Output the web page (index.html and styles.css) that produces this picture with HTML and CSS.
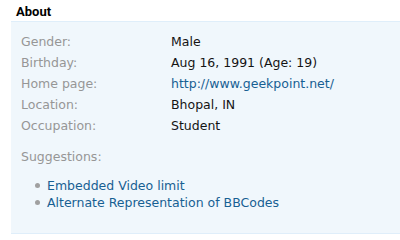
FILE: index.html
```html
<!DOCTYPE html>
<html>
<head>
<meta charset="utf-8">
<link rel="stylesheet" href="styles.css">
</head>
<body>
<div class="section">
  <h3 class="heading">About</h3>
  <div class="panel">
    <dl class="pairs"><dt>Gender:</dt><dd>Male</dd></dl>
    <dl class="pairs"><dt>Birthday:</dt><dd>Aug 16, 1991 (Age: 19)</dd></dl>
    <dl class="pairs"><dt>Home page:</dt><dd><a href="#" class="link">http://www.geekpoint.net/</a></dd></dl>
    <dl class="pairs"><dt>Location:</dt><dd>Bhopal, IN</dd></dl>
    <dl class="pairs"><dt>Occupation:</dt><dd>Student</dd></dl>
    <div class="suggest">
      <div class="label">Suggestions:</div>
      <ul class="list">
        <li><a href="#" class="link">Embedded Video limit</a></li>
        <li><a href="#" class="link">Alternate Representation of BBCodes</a></li>
      </ul>
    </div>
  </div>
</div>
</body>
</html>
```
FILE: styles.css
```css
html, body { margin: 0; padding: 0; background: #fff; }
body { font-family: "DejaVu Sans", Verdana, sans-serif; font-size: 12.5px; color: #000; }
.section { margin-left: 11px; padding-top: 4px; }
.heading {
  margin: 0; padding: 0 0 2px 5px;
  font-family: Roboto, "Liberation Sans", sans-serif;
  font-size: 13px; font-weight: bold; line-height: 15px; color: #000;
  border-bottom: 1px solid #dfeefa;
}
.panel {
  background: #f0f7fc;
  border-bottom: 1px solid #dfeefa;
  padding: 9px 10px 14px 10px;
  height: 188px;
}
.pairs { display: flex; margin: 0; line-height: 21px; }
.pairs dt { width: 150px; color: #969696; }
.pairs dd { margin: 0; color: #141414; }
.link { color: #176093; text-decoration: none; }
.suggest { margin-top: 10px; }
.label { color: #969696; line-height: 21px; }
.list { margin: 10px 0 0 0; padding: 0 0 0 26px; line-height: 17px; list-style: none; }
.list li { position: relative; }
.list li::before {
  content: ""; position: absolute; left: -12px; top: 6px;
  width: 5px; height: 5px; border-radius: 50%; background: #a0a0a0;
}
```
